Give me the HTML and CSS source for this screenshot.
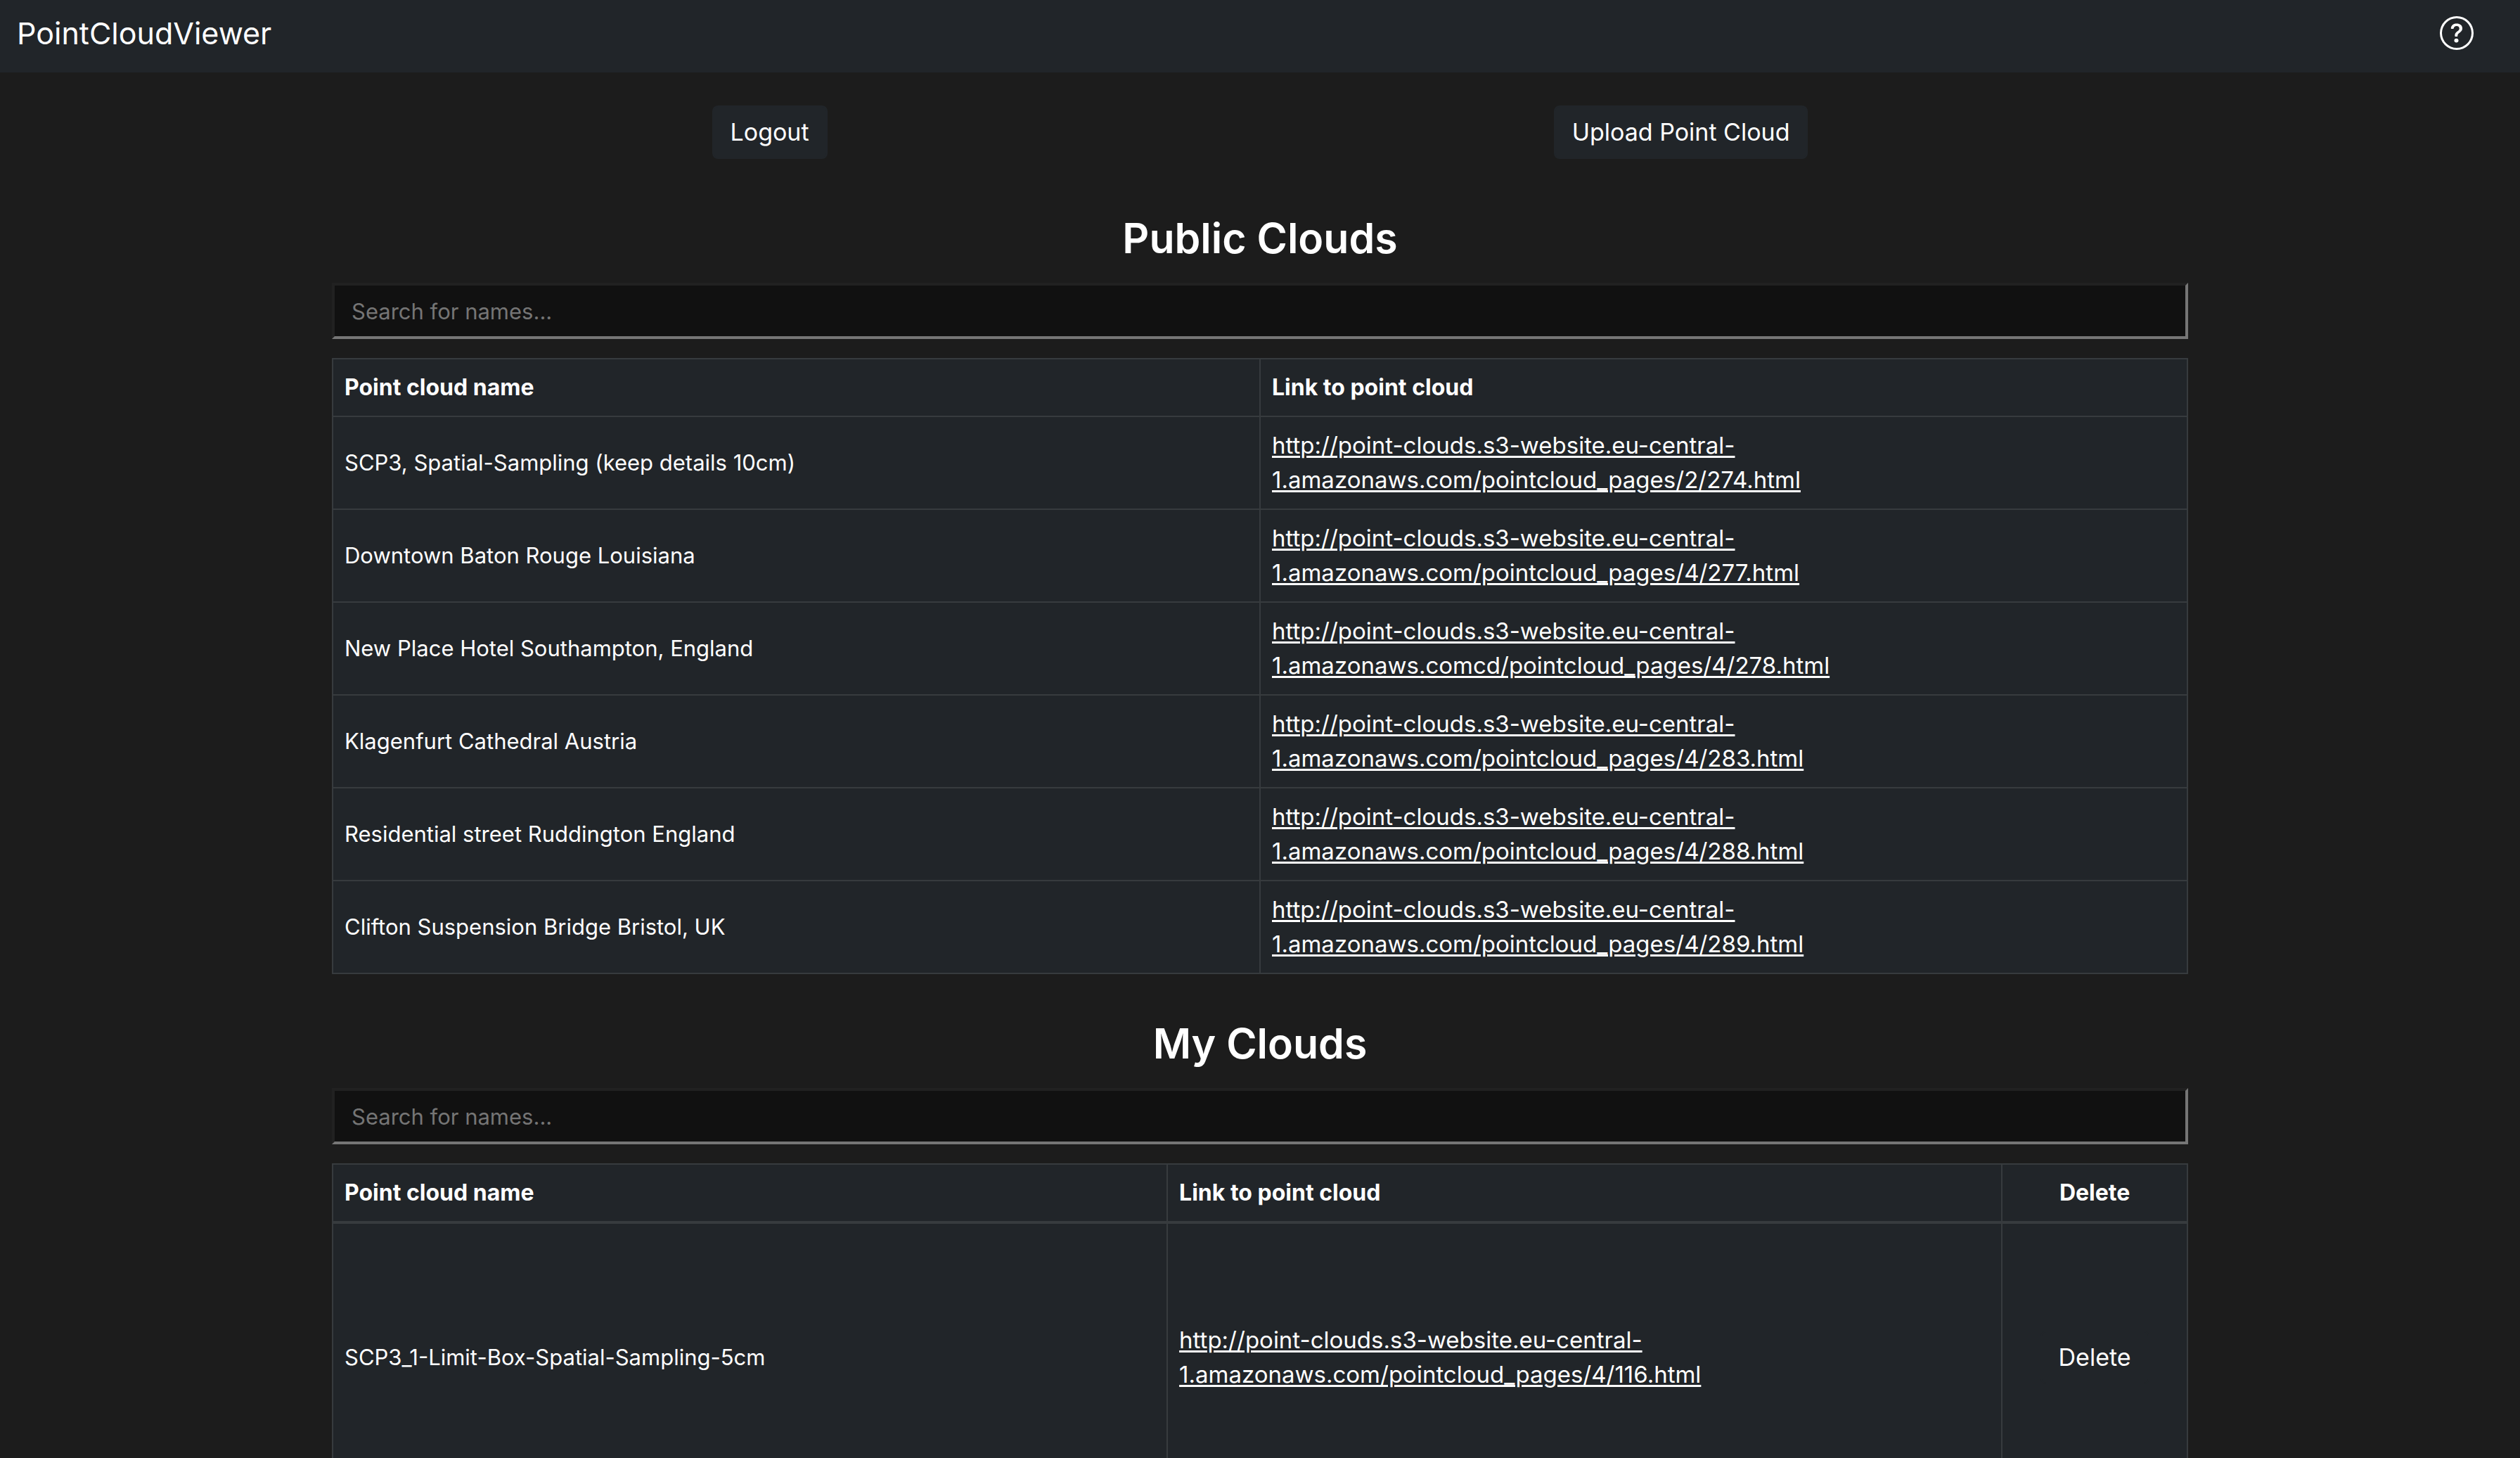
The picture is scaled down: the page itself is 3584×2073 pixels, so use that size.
FILE: index.html
```html
<!DOCTYPE html>
<html lang="en">
<head>
<meta charset="utf-8">
<meta name="viewport" content="width=device-width, initial-scale=1">
<title>PointCloudViewer</title>
<link rel="stylesheet" href="styles.css">
</head>
<body>
<header class="navbar">
  <a class="brand" href="#">PointCloudViewer</a>
  <a class="help" href="#" aria-label="Help">
    <svg class="help-icon" viewBox="0 0 16 16" fill="currentColor" aria-hidden="true">
      <path d="M8 15A7 7 0 1 1 8 1a7 7 0 0 1 0 14zm0 1A8 8 0 1 0 8 0a8 8 0 0 0 0 16z"/>
      <path d="M5.255 5.786a.237.237 0 0 0 .241.247h.825c.138 0 .248-.113.266-.25.09-.656.54-1.134 1.342-1.134.686 0 1.314.343 1.314 1.168 0 .635-.374.927-.965 1.371-.673.489-1.206 1.06-1.168 1.987l.003.217a.25.25 0 0 0 .25.246h.811a.25.25 0 0 0 .25-.25v-.105c0-.718.273-.927 1.01-1.486.609-.463 1.244-.977 1.244-2.056 0-1.511-1.276-2.241-2.673-2.241-1.267 0-2.655.59-2.75 2.286zm1.557 5.763c0 .533.425.927 1.01.927.609 0 1.028-.394 1.028-.927 0-.552-.42-.94-1.029-.94-.584 0-1.009.388-1.009.94z"/>
    </svg>
  </a>
</header>

<main class="container">
  <div class="actions">
    <button class="btn" type="button">Logout</button>
    <button class="btn" type="button">Upload Point Cloud</button>
  </div>

  <section class="clouds">
    <h2 class="heading">Public Clouds</h2>
    <input class="search" type="text" placeholder="Search for names..." aria-label="Search public clouds">
    <table class="table">
      <thead>
        <tr><th class="half">Point cloud name</th><th class="half">Link to point cloud</th></tr>
      </thead>
      <tbody>
        <tr><td>SCP3, Spatial-Sampling (keep details 10cm)</td><td><a class="link" href="#">http://point-clouds.s3-website.eu-central-<br>1.amazonaws.com/pointcloud_pages/2/274.html</a></td></tr>
        <tr><td>Downtown Baton Rouge Louisiana</td><td><a class="link" href="#">http://point-clouds.s3-website.eu-central-<br>1.amazonaws.com/pointcloud_pages/4/277.html</a></td></tr>
        <tr><td>New Place Hotel Southampton, England</td><td><a class="link" href="#">http://point-clouds.s3-website.eu-central-<br>1.amazonaws.comcd/pointcloud_pages/4/278.html</a></td></tr>
        <tr><td>Klagenfurt Cathedral Austria</td><td><a class="link" href="#">http://point-clouds.s3-website.eu-central-<br>1.amazonaws.com/pointcloud_pages/4/283.html</a></td></tr>
        <tr><td>Residential street Ruddington England</td><td><a class="link" href="#">http://point-clouds.s3-website.eu-central-<br>1.amazonaws.com/pointcloud_pages/4/288.html</a></td></tr>
        <tr><td>Clifton Suspension Bridge Bristol, UK</td><td><a class="link" href="#">http://point-clouds.s3-website.eu-central-<br>1.amazonaws.com/pointcloud_pages/4/289.html</a></td></tr>
      </tbody>
    </table>
  </section>

  <section class="clouds">
    <h2 class="heading">My Clouds</h2>
    <input class="search" type="text" placeholder="Search for names..." aria-label="Search my clouds">
    <table class="table table-own">
      <thead>
        <tr><th class="wide">Point cloud name</th><th class="wide">Link to point cloud</th><th class="narrow">Delete</th></tr>
      </thead>
      <tbody>
        <tr><td>SCP3_1-Limit-Box-Spatial-Sampling-5cm</td><td><a class="link" href="#">http://point-clouds.s3-website.eu-central-<br>1.amazonaws.com/pointcloud_pages/4/116.html</a></td><td class="narrow"><button class="btn" type="button">Delete</button></td></tr>
      </tbody>
    </table>
  </section>
</main>
</body>
</html>
```
FILE: styles.css
```css
* {
  box-sizing: border-box;
}

body {
  margin: 0;
  background: #1c1c1c;
  color: #fff;
  font-family: Inter, "Liberation Sans", sans-serif;
  font-size: 31px;
  line-height: 48px;
}

.navbar {
  display: flex;
  align-items: center;
  justify-content: space-between;
  padding: 17px 66px 26px 24px;
  background: #212529;
}

.brand {
  color: #fff;
  font-size: 43px;
  line-height: 60px;
  text-decoration: none;
}

.help {
  display: flex;
  color: #fff;
}

.help-icon {
  width: 48px;
  height: 48px;
}

.container {
  max-width: 2640px;
  margin: 0 auto;
}

.actions {
  display: flex;
  justify-content: space-around;
  padding: 47px 24px 14px;
}

.btn {
  padding: 12px 24px;
  border: 2px solid #212529;
  border-radius: 8px;
  background: #212529;
  color: #fff;
  font-family: inherit;
  font-size: 34px;
  line-height: 48px;
}

.clouds {
  padding-top: 61px;
}

.heading {
  margin: 0 0 25px;
  font-size: 59px;
  font-weight: 600;
  line-height: 76px;
  text-align: center;
}

.search {
  display: block;
  width: 100%;
  height: 80px;
  margin: 0 0 27px;
  padding: 12px 24px;
  border: 4px solid;
  border-color: #212121 #767676 #767676 #212121;
  background: #111;
  color: #fff;
  font: inherit;
}

.search::placeholder {
  color: #757575;
  opacity: 1;
}

.table {
  width: 100%;
  border-collapse: collapse;
  table-layout: fixed;
  background: #212529;
}

.table th,
.table td {
  padding: 16px;
  border: 2px solid #373b3e;
  text-align: left;
  vertical-align: middle;
}

.table th {
  font-size: 32px;
}

.half {
  width: 50%;
}

.wide {
  width: 45%;
}

.table .narrow {
  width: 10%;
  text-align: center;
}

.table-own th {
  border-bottom-width: 4px;
}

.table-own td {
  height: 383px;
}

.link {
  color: #fff;
  font-size: 33px;
  line-height: 49px;
  text-decoration: underline;
  text-decoration-thickness: 3px;
  text-underline-offset: 3px;
}
```
